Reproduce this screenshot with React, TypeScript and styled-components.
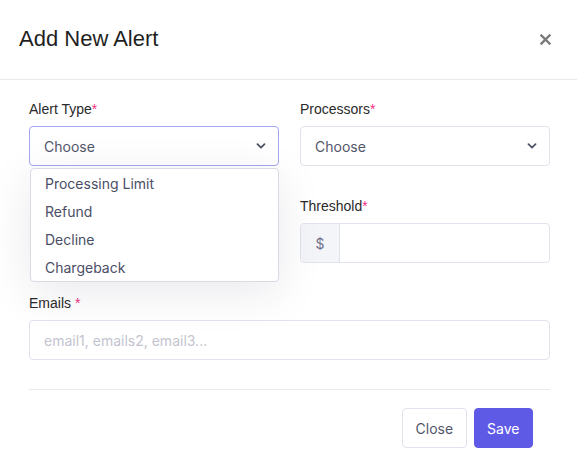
import React from "react";
import styled, { createGlobalStyle } from "styled-components";

const Global = createGlobalStyle`
  html, body { margin: 0; padding: 0; background: #ffffff; }
  * { box-sizing: border-box; }
`;

const Modal = styled.div`
  width: 577px;
  height: 470px;
  background: #fff;
  font-family: Inter, "Liberation Sans", sans-serif;
`;

const Header = styled.div`
  height: 80px;
  display: flex;
  align-items: center;
  justify-content: space-between;
  padding: 0 26px 1px 19px;
  border-bottom: 1px solid #e8e8ee;
`;

const Title = styled.h2`
  margin: 0;
  font-family: "Liberation Sans", Arial, sans-serif;
  font-weight: 400;
  font-size: 22px;
  color: #1f1f1f;
`;

const CloseX = styled.button`
  border: 0;
  background: none;
  padding: 0;
  width: 12px;
  height: 12px;
  display: flex;
  align-items: center;
  justify-content: center;
  cursor: pointer;
`;

const Body = styled.div`
  padding: 19px 27px 0 29px;
`;

const Grid = styled.div`
  display: grid;
  grid-template-columns: 250px 250px;
  column-gap: 21px;
  row-gap: 30px;
`;

const Field = styled.div<{ $full?: boolean }>`
  position: relative;
  grid-column: ${(p) => (p.$full ? "1 / -1" : "auto")};
`;

const Label = styled.div`
  font-family: "Liberation Sans", Arial, sans-serif;
  font-size: 14px;
  line-height: 20px;
  color: #2a2a2a;
  margin-bottom: 7px;
`;

const Req = styled.span<{ $space?: boolean }>`
  color: #f0307f;
  margin-left: ${(p) => (p.$space ? "4px" : "0")};
`;

const Select = styled.div<{ $focused?: boolean }>`
  height: 40px;
  border: 1px solid ${(p) => (p.$focused ? "#a4a6f2" : "#e1e2ec")};
  border-radius: 4px;
  display: flex;
  align-items: center;
  justify-content: space-between;
  padding: 0 12px 0 14px;
  font-size: 14px;
  color: #52566a;
  background: #fff;
`;

const Menu = styled.div`
  position: absolute;
  left: 1px;
  right: 0;
  top: 69px;
  background: #fff;
  border: 1px solid #d9dae3;
  border-radius: 4px;
  box-shadow: 0 10px 45px rgba(40, 40, 80, 0.1);
  z-index: 5;
`;

const MenuItem = styled.div`
  height: 28px;
  display: flex;
  align-items: center;
  padding-left: 14px;
  font-size: 14px;
  color: #4a4e66;
`;

const InputGroup = styled.div`
  height: 40px;
  display: flex;
  border: 1px solid #e1e2ec;
  border-radius: 4px;
  overflow: hidden;
`;

const Addon = styled.div`
  width: 39px;
  background: #f4f5f9;
  border-right: 1px solid #e1e2ec;
  display: flex;
  align-items: center;
  justify-content: center;
  font-size: 14px;
  color: #6e7189;
`;

const Input = styled.div`
  flex: 1;
  height: 40px;
  border: 1px solid #e1e2ec;
  border-radius: 4px;
  display: flex;
  align-items: center;
  padding-left: 14px;
  font-size: 14px;
  color: #c3c4cf;
`;

const Divider = styled.div`
  height: 1px;
  background: #e8e8ee;
  margin-top: 29px;
`;

const Footer = styled.div`
  display: flex;
  justify-content: flex-end;
  gap: 7px;
  padding: 18px 17px 0 0;
`;

const Button = styled.button<{ $primary?: boolean }>`
  height: 40px;
  padding: 0 12.5px;
  border-radius: 4px;
  font-family: Inter, "Liberation Sans", sans-serif;
  font-size: 14px;
  border: 1px solid ${(p) => (p.$primary ? "#5f5ae6" : "#e1e2ec")};
  background: ${(p) => (p.$primary ? "#5f5ae6" : "#fff")};
  color: ${(p) => (p.$primary ? "#fff" : "#52566a")};
`;

const Chevron = () => (
  <svg width="10" height="6" viewBox="0 0 10 6" fill="none">
    <path d="M1.5 1.2 L5 4.6 L8.5 1.2" stroke="#4f5366" strokeWidth="1.8" strokeLinecap="round" strokeLinejoin="round" />
  </svg>
);

export default function App() {
  return (
    <Modal>
      <Global />
      <Header>
        <Title>Add New Alert</Title>
        <CloseX aria-label="close">
          <svg width="11" height="11" viewBox="0 0 11 11">
            <path d="M1.5 1.5 L9.5 9.5 M9.5 1.5 L1.5 9.5" stroke="#7a7a7a" strokeWidth="2.4" strokeLinecap="square" />
          </svg>
        </CloseX>
      </Header>
      <Body>
        <Grid>
          <Field>
            <Label>
              Alert Type<Req>*</Req>
            </Label>
            <Select $focused>
              <span>Choose</span>
              <Chevron />
            </Select>
            <Menu>
              {["Processing Limit", "Refund", "Decline", "Chargeback"].map((t) => (
                <MenuItem key={t}>{t}</MenuItem>
              ))}
            </Menu>
          </Field>
          <Field>
            <Label>
              Processors<Req>*</Req>
            </Label>
            <Select>
              <span>Choose</span>
              <Chevron />
            </Select>
          </Field>
          <Field />
          <Field>
            <Label>
              Threshold<Req>*</Req>
            </Label>
            <InputGroup>
              <Addon>$</Addon>
            </InputGroup>
          </Field>
          <Field $full>
            <Label>
              Emails<Req $space>*</Req>
            </Label>
            <Input>email1, emails2, email3...</Input>
          </Field>
        </Grid>
        <Divider />
        <Footer>
          <Button>Close</Button>
          <Button $primary>Save</Button>
        </Footer>
      </Body>
    </Modal>
  );
}
